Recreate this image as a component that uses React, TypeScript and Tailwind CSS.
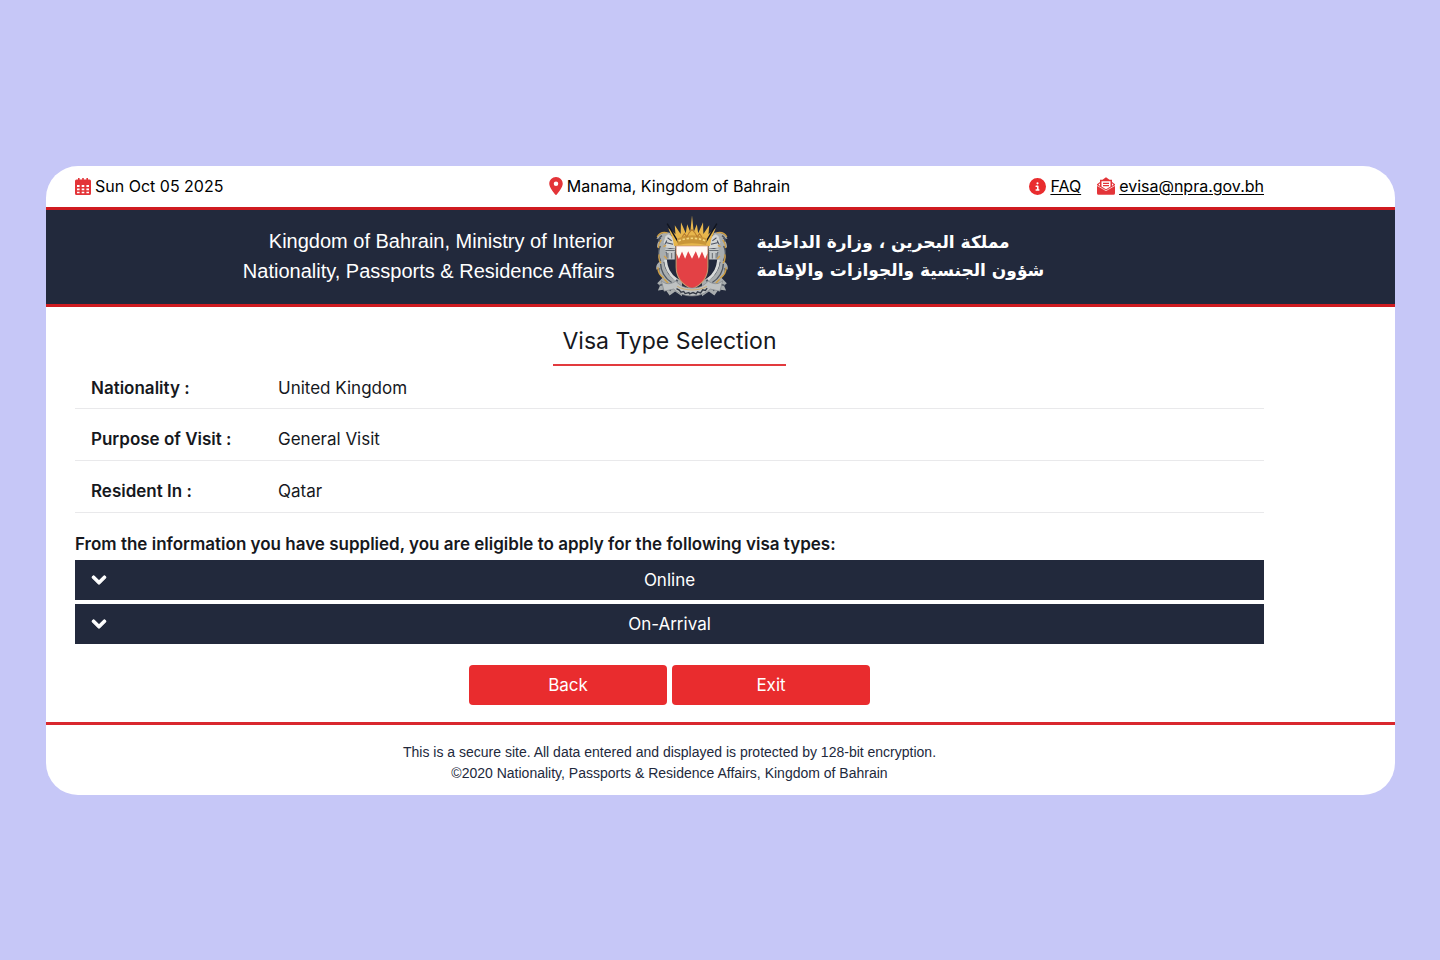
import { FaChevronDown } from "react-icons/fa";
import { FaCircleInfo, FaLocationDot } from "react-icons/fa6";

const details = [
  { label: "Nationality :", value: "United Kingdom" },
  { label: "Purpose of Visit :", value: "General Visit" },
  { label: "Resident In :", value: "Qatar" },
];

const visaTypes = ["Online", "On-Arrival"];

function CalendarIcon() {
  return (
    <svg viewBox="0 0 16 17" className="h-[17px] w-4 text-[#e33438]" aria-hidden="true">
      <path d="M3 0h1.600v2H3zM7.200 0h1.600v2H7.200zM11.400 0H13v2h-1.600z" fill="currentColor" />
      <path d="M1.500 1.600h13A1.500 1.500 0 0 1 16 3.100V5H0V3.100A1.500 1.500 0 0 1 1.500 1.600zM0 5h16v10.500a1.500 1.500 0 0 1-1.500 1.500h-13A1.500 1.500 0 0 1 0 15.500z" fill="currentColor" />
      <path d="M2 7h2.600v2H2zM6.700 7h2.600v2H6.700zM11.400 7H14v2h-2.600zM2 10.500h2.600v1.700H2zM6.700 10.500h2.600v1.700H6.700zM11.400 10.500H14v1.700h-2.600zM2 13.700h2.600v1.500H2zM6.700 13.700h2.600v1.500H6.700zM11.400 13.700H14v1.500h-2.600z" fill="white" />
    </svg>
  );
}

function MailIcon() {
  return (
    <svg viewBox="0 0 18 18" className="size-[18px] text-[#e33438]" aria-hidden="true">
      <path d="M3 2.800h2.500L9 .3l3.500 2.500H15V5l3 2.300v8.900a1.600 1.600 0 0 1-1.600 1.600H1.600A1.600 1.600 0 0 1 0 16.200V7.300L3 5z" fill="currentColor" />
      <path d="M4.500 4.200h9v5.300L9 12.200 4.500 9.500z" fill="white" />
      <path d="M6 5.700h6v1.200H6zM6 8.100h6v1.200H6z" fill="currentColor" />
      <path d="M0 8.500l9 5.200 9-5.200" fill="none" stroke="white" strokeWidth=".7" />
      <path d="M3 6.200L1.400 7.700 3 8.800zM15 6.200l1.600 1.500L15 8.800z" fill="white" />
    </svg>
  );
}

function Side() {
  return (
    <g>
      <path d="M90 84C72 80 54 88 50 102l14-3c-9 8-14 18-12 28l11-6c-9 14-10 32-3 46-9 6-13 15-10 24l9-5c-3 12 0 22 8 29l-15 15 8 7-6 14 22-3 12 18 16-12 20 14V222c-22-8-36-22-42-40l-6-50 18-6V98z" fill="#a9adae" />
      <path d="M66 92c-8 5-10 12-8 18M60 124c-6 14-5 28 2 42M62 174c0 20 12 42 32 54M72 168c4 24 18 44 40 56M59 236l20-4 12 20" fill="none" stroke="#4e5560" strokeWidth="4" />
      <path d="M82 84c-14-3-25 2-30 12M64 104c-7 9-9 17-8 24M58 146c-2 10 0 20 5 26M54 184c0 15 7 25 17 31M72 218l12 12" fill="none" stroke="#cf9f45" strokeWidth="4" />
      <path d="M76 94l8-6 14 8 6 18 1 16-28-4-6-14z" fill="#d4d6d5" />
      <path d="M82 98l12 9M76 112l22 5M80 106l-6 12" stroke="#4a5060" strokeWidth="3" />
      <path d="M75 130h29v9H75zM79 139h24v22H79z" fill="#c4c8c9" />
      <path d="M76 135h27M83 142v16M94 142v16" stroke="#686d72" strokeWidth="3" />
      <path d="M76 162c1 24 13 44 31 58" fill="none" stroke="#d8dad9" strokeWidth="8" />
      <path d="M70 124l8-4M72 151l8 8" stroke="#d3a14a" strokeWidth="4" />
    </g>
  );
}

function Emblem() {
  return (
    <svg viewBox="47 32 212 238" className="h-[82px] w-[74px] shrink-0" role="img" aria-label="Coat of arms of Bahrain">
      <Side />
      <g transform="translate(306 0) scale(-1 1)">
        <Side />
      </g>
      <path d="M101 122l-4-20-13-32 21 18-2-26 17 25 1-34 14 32 4-26 9 22 5-48 5 48 9-22 4 26 14-32 1 34 17-25-2 26 21-18-13 32-4 20z" fill="#e7b64c" />
      <path d="M81 57l32 54M225 57l-32 54" stroke="#11151f" strokeWidth="4" />
      <path d="M109 101q44-20 88 0l-3 18q-41-10-82 0z" fill="#c99538" />
      <path d="M114 107q39-15 78 0" fill="none" stroke="#f5d77c" strokeWidth="5" strokeDasharray="7 5" />
      <path d="M124 96l7-10 7 9 7-12 8-9 8 9 7 12 7-9 7 10" fill="none" stroke="#b77c2f" strokeWidth="3" />
      <path d="M107 122h92v61c0 31-17 51-46 64-29-13-46-33-46-64z" fill="#e34145" stroke="#c99c6e" strokeWidth="3" />
      <path d="M108 123h90v20l-7 17-9-22-9 21-9-22-11 22-11-22-9 22-9-21-9 22-7-17z" fill="#fff9f4" />
      <path d="M64 223c14 12 28 10 42 1 14 15 28 20 47 20s33-5 47-20c14 9 28 11 42-1l-8 30-28-6c-13 12-30 20-53 20s-40-8-53-20l-28 6z" fill="#bfc2c2" stroke="#81868a" strokeWidth="2" />
      <path d="M108 246l8 4 5 6 8-2 4 6 11-3 2 4 10-4 9 4 4-6 9 3 6-9 8 2 5-7" fill="none" stroke="#353b46" strokeWidth="4" />
      <path d="M110 239c23 14 63 14 86 0" fill="none" stroke="#d0a34d" strokeWidth="2" />
    </svg>
  );
}

export default function App() {
  return (
    <div className="flex min-h-screen flex-col justify-center bg-[#c6c7f7] pt-px pr-[45px] pl-[46px] font-[Inter,sans-serif] text-[17px] leading-6 text-[#16181d]">
      <div className="overflow-hidden rounded-[32px] bg-white">
        <div className="flex justify-between pt-2 pr-[131px] pb-[9px] pl-[29px] text-[16px] text-black">
          <div className="flex flex-1 items-center gap-1">
            <CalendarIcon />
            <time dateTime="2025-10-05">Sun Oct 05 2025</time>
          </div>
          <div className="flex items-center gap-1">
            <FaLocationDot className="h-[18px] w-[14px] text-[#e33438]" />
            <span>Manama, Kingdom of Bahrain</span>
          </div>
          <div className="flex flex-1 items-center justify-end gap-4">
            <a href="#faq" className="flex items-center gap-1">
              <FaCircleInfo className="size-[17px] text-[#e92c2e]" />
              <span className="underline underline-offset-2">FAQ</span>
            </a>
            <a href="mailto:evisa@npra.gov.bh" className="flex items-center gap-1">
              <MailIcon />
              <span className="underline underline-offset-2">evisa@npra.gov.bh</span>
            </a>
          </div>
        </div>

        <header className="flex items-center border-y-[3px] border-[#cf1b20] bg-[#22293c] pt-[5px] pr-[70px] pb-[7px] text-white">
          <div className="flex-1 text-right font-['Liberation_Sans',Arial,sans-serif] text-[20px] leading-[30px]">
            <p>Kingdom of Bahrain, Ministry of Interior</p>
            <p>Nationality, Passports &amp; Residence Affairs</p>
          </div>
          <div className="mr-7 ml-10">
            <Emblem />
          </div>
          <div lang="ar" dir="rtl" className="flex-1 text-left font-['DejaVu_Sans',sans-serif] text-[17px] leading-7 font-bold">
            <p>مملكة البحرين ، وزارة الداخلية</p>
            <p>شؤون الجنسية والجوازات والإقامة</p>
          </div>
        </header>

        <main className="pt-[15px] pr-[131px] pb-[17px] pl-[29px]">
          <h1 className="mx-auto w-fit border-b-2 border-[#e23a3e] px-[9px] pb-1 text-[23px] leading-[38px]">Visa Type Selection</h1>
          <dl>
            {details.map((item) => (
              <div key={item.label} className="flex border-b border-[#e9e9eb] px-4 pt-[18px] pb-[9px] first:pt-[10px] first:pb-2">
                <dt className="w-[187px] font-semibold">{item.label}</dt>
                <dd>{item.value}</dd>
              </div>
            ))}
          </dl>
          <h2 className="pt-[19px] pb-1 font-semibold">From the information you have supplied, you are eligible to apply for the following visa types:</h2>
          <div className="flex flex-col gap-1">
            {visaTypes.map((type) => (
              <button key={type} type="button" aria-expanded="false" className="grid h-10 w-full grid-cols-[1fr_auto_1fr] items-center bg-[#22293c] px-4 text-white">
                <FaChevronDown className="size-4 stroke-white stroke-[36]" />
                <span>{type}</span>
              </button>
            ))}
          </div>
          <div className="mt-[21px] flex justify-center gap-[5px]">
            <button type="button" className="h-10 w-[198px] rounded-[4px] bg-[#e92c2e] text-white">Back</button>
            <button type="button" className="h-10 w-[198px] rounded-[4px] bg-[#e92c2e] text-white">Exit</button>
          </div>
        </main>

        <footer className="border-t-[3px] border-[#d9282e] pt-[17px] pr-[131px] pb-[11px] pl-[29px] text-center font-['Liberation_Sans',Arial,sans-serif] text-[14px] leading-[21px] text-[#22293c]">
          <p>This is a secure site. All data entered and displayed is protected by 128-bit encryption.</p>
          <p>©2020 Nationality, Passports &amp; Residence Affairs, Kingdom of Bahrain</p>
        </footer>
      </div>
    </div>
  );
}
